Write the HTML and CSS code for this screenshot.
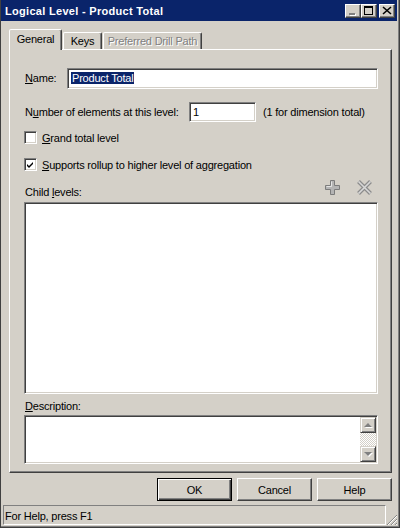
FILE: index.html
```html
<!DOCTYPE html>
<html lang="en">
<head>
    <meta charset="UTF-8">
    <title>Logical Level - Product Total</title>
    <link rel="stylesheet" href="styles.css">
</head>
<body>
    <div class="window">
        <div class="titlebar">
            <span class="title">Logical Level - Product Total</span>
            <div class="caption-buttons">
                <span class="cap-btn">
                    <svg width="14" height="12" viewBox="0 0 14 12">
                        <rect x="4" y="9" width="6" height="2" fill="#fff"/>
                        <rect x="3" y="8" width="6" height="2" fill="#808080"/>
                    </svg>
                </span>
                <span class="cap-btn">
                    <svg width="14" height="12" viewBox="0 0 14 12">
                        <path d="M2 1h9v9h-9z M3 3v6h7v-6z" fill="#000" fill-rule="evenodd"/>
                    </svg>
                </span>
                <span class="cap-btn close">
                    <svg width="14" height="12" viewBox="0 0 14 12">
                        <path d="M3 2l8 7M11 2l-8 7" stroke="#000" stroke-width="1.6"/>
                    </svg>
                </span>
            </div>
        </div>

        <div class="content">
            <div class="tabs">
                <div class="tab active">General</div>
                <div class="tab keys">Keys</div>
                <div class="tab disabled">Preferred Drill Path</div>
            </div>

            <div class="panel">
                <div class="row name-row">
                    <label class="lbl name-lbl"><u>N</u>ame:</label>
                    <div class="field name-field"><span class="selected">Product Total</span></div>
                </div>

                <div class="row number-row">
                    <label class="lbl">N<u>u</u>mber of elements at this level:</label>
                    <div class="field number-field">1</div>
                    <span class="hint">(1 for dimension total)</span>
                </div>

                <div class="check-row first">
                    <span class="checkbox"></span>
                    <span><u>G</u>rand total level</span>
                </div>

                <div class="check-row second">
                    <span class="checkbox">
                        <svg width="9" height="9" viewBox="0 0 9 9">
                            <path d="M1 3l2 2 4-4v2l-4 4-2-2z" fill="#000"/>
                        </svg>
                    </span>
                    <span><u>S</u>upports rollup to higher level of aggregation</span>
                </div>

                <div class="list-head">
                    <label class="lbl">Child <u>l</u>evels:</label>
                    <div class="tools">
                        <svg class="tool" width="17" height="17" viewBox="0 0 17 17">
                            <path d="M6.5 1.5h4v5h5v4h-5v5h-4v-5h-5v-4h5z" fill="#b4b4b4" stroke="#7c7c7c"/>
                            <path d="M7.5 2.5v5h-5" fill="none" stroke="#e4e4e4"/>
                        </svg>
                        <svg class="tool" width="17" height="17" viewBox="0 0 17 17">
                            <path d="M2.5 2.5l12 12M14.5 2.5l-12 12" stroke="#8c8c8c" stroke-width="4"/>
                            <path d="M2.5 2.5l12 12M14.5 2.5l-12 12" stroke="#d8d8d8" stroke-width="1.6"/>
                        </svg>
                    </div>
                </div>
                <div class="listbox"></div>

                <label class="lbl desc-lbl"><u>D</u>escription:</label>
                <div class="memo">
                    <div class="memo-text"></div>
                    <div class="scrollbar">
                        <span class="scroll-btn">
                            <svg width="9" height="5" viewBox="0 0 9 5">
                                <path d="M5 1l4 4h-8z" fill="#fff"/>
                                <path d="M4 0l4 4h-8z" fill="#808080"/>
                            </svg>
                        </span>
                        <span class="track"></span>
                        <span class="scroll-btn">
                            <svg width="9" height="5" viewBox="0 0 9 5">
                                <path d="M1 1h8l-4 4z" fill="#fff"/>
                                <path d="M0 0h8l-4 4z" fill="#808080"/>
                            </svg>
                        </span>
                    </div>
                </div>
            </div>

            <div class="buttons">
                <button class="btn default">OK</button>
                <button class="btn">Cancel</button>
                <button class="btn">Help</button>
            </div>
        </div>

        <div class="statusbar">
            <div class="status-text">For Help, press F1</div>
            <svg class="grip" width="12" height="12" viewBox="0 0 12 12">
                <path d="M11 1L1 11M11 5L5 11M11 9L9 11" stroke="#808080" stroke-width="1"/>
                <path d="M11 2L2 11M11 6L6 11M11 10L10 11" stroke="#fff" stroke-width="1"/>
            </svg>
        </div>
    </div>
</body>
</html>
```

FILE: styles.css
```css
* {
    box-sizing: border-box;
}
body {
    margin: 0;
    background-color: #d4d0c8;
    font-family: "Liberation Sans", Arial, sans-serif;
    font-size: 11px;
    letter-spacing: -.2px;
    color: #000;
}
u {
    text-decoration: underline;
    text-underline-offset: 1px;
}
.window {
    width: 400px;
    height: 528px;
    display: flex;
    flex-direction: column;
    border-left: 1px solid #404040;
    border-right: 1px solid #404040;
    border-bottom: 1px solid #404040;
    box-shadow: inset -1px -1px #808080;
}
.titlebar {
    height: 21px;
    margin-right: 2px;
    background-color: #0a246a;
    display: flex;
    align-items: center;
    justify-content: space-between;
    padding: 0 2px 0 4px;
}
.title {
    color: #fff;
    font-weight: bold;
    letter-spacing: .3px;
    padding-top: 1px;
}
.caption-buttons {
    display: flex;
}
.cap-btn {
    width: 16px;
    height: 14px;
    display: flex;
    align-items: center;
    justify-content: center;
    background-color: #d4d0c8;
    border: 1px solid;
    border-color: #fff #404040 #404040 #fff;
    box-shadow: inset -1px -1px #808080;
}
.cap-btn.close {
    margin-left: 2px;
}
.content {
    flex: 1;
    display: flex;
    flex-direction: column;
    padding: 8px 7px 0 8px;
}
.tabs {
    height: 20px;
    display: flex;
    align-items: flex-end;
}
.tab {
    height: 17px;
    padding-top: 2px;
    text-align: center;
    border: 1px solid;
    border-bottom: none;
    border-color: #fff #404040 transparent #fff;
    border-radius: 2px 2px 0 0;
    box-shadow: inset -1px 0 #808080;
    white-space: nowrap;
}
.tab.active {
    width: 53px;
    height: 21px;
    margin-bottom: -1px;
    padding-top: 3px;
    position: relative;
    z-index: 1;
    background-color: #d4d0c8;
}
.tab.keys {
    width: 39px;
    margin-left: 1px;
}
.tab.disabled {
    width: 99px;
    margin-left: 1px;
    color: #808080;
    text-shadow: 1px 1px #fff;
}
.panel {
    height: 424px;
    border: 1px solid;
    border-color: #fff #404040 #404040 #fff;
    box-shadow: inset -1px -1px #808080;
    padding: 18px 13px 0 15px;
    display: flex;
    flex-direction: column;
}
.row {
    display: flex;
    align-items: center;
}
.lbl {
    line-height: 13px;
}
.name-lbl {
    width: 42px;
}
.field {
    height: 20px;
    background-color: #fff;
    border: 1px solid;
    border-color: #808080 #fff #fff #808080;
    box-shadow: inset 1px 1px #404040, inset -1px -1px #d4d0c8;
    padding: 3px 0 0 3px;
    line-height: 13px;
}
.name-field {
    flex: 1;
    height: 21px;
}
.selected {
    background-color: #0a246a;
    color: #fff;
    padding: 0 1px;
}
.number-row {
    margin-top: 13px;
}
.number-row .lbl {
    width: 164px;
}
.number-field {
    width: 67px;
}
.hint {
    margin-left: 7px;
}
.check-row {
    display: flex;
    align-items: center;
    gap: 5px;
    height: 13px;
    margin-left: -1px;
}
.check-row.first {
    margin-top: 9px;
}
.check-row.second {
    margin-top: 14px;
}
.checkbox {
    width: 13px;
    height: 13px;
    background-color: #fff;
    border: 1px solid;
    border-color: #808080 #fff #fff #808080;
    box-shadow: inset 1px 1px #404040, inset -1px -1px #d4d0c8;
    display: flex;
    align-items: center;
    justify-content: center;
}
.checkbox svg {
    margin: 1px 0 0 0;
}
.list-head {
    height: 31px;
    display: flex;
    justify-content: space-between;
    align-items: flex-end;
    padding-bottom: 3px;
}
.tools {
    align-self: flex-start;
    display: flex;
    gap: 15px;
    margin-top: 8px;
    margin-right: 5px;
}
.listbox {
    height: 192px;
    margin-left: -1px;
    background-color: #fff;
    border: 1px solid;
    border-color: #808080 #fff #fff #808080;
    box-shadow: inset 1px 1px #404040, inset -1px -1px #d4d0c8;
}
.desc-lbl {
    margin-top: 6px;
}
.memo {
    height: 49px;
    margin-top: 2px;
    margin-left: -1px;
    display: flex;
    background-color: #fff;
    border: 1px solid;
    border-color: #808080 #fff #fff #808080;
    box-shadow: inset 1px 1px #404040, inset -1px -1px #d4d0c8;
    padding: 1px;
}
.memo-text {
    flex: 1;
}
.scrollbar {
    width: 16px;
    display: flex;
    flex-direction: column;
}
.scroll-btn {
    height: 16px;
    display: flex;
    align-items: center;
    justify-content: center;
    background-color: #d4d0c8;
    border: 1px solid;
    border-color: #d4d0c8 #404040 #404040 #d4d0c8;
    box-shadow: inset 1px 1px #fff, inset -1px -1px #808080;
}
.track {
    flex: 1;
    background: repeating-conic-gradient(#d4d0c8 0 25%, #fff 0 50%) 0 0 / 2px 2px;
}
.buttons {
    display: flex;
    justify-content: flex-end;
    gap: 5px;
    margin-top: 5px;
}
.btn {
    width: 75px;
    height: 23px;
    font-family: "Liberation Sans", Arial, sans-serif;
    font-size: 11px;
    letter-spacing: -.2px;
    color: #000;
    background-color: #d4d0c8;
    border: 1px solid;
    border-color: #fff #404040 #404040 #fff;
    box-shadow: inset -1px -1px #808080;
    padding: 0;
}
.btn.default {
    border: 1px solid #000;
    box-shadow: inset 1px 1px #fff, inset -1px -1px #404040, inset -2px -2px #808080;
}
.statusbar {
    height: 22px;
    display: flex;
    align-items: flex-end;
    padding: 0 1px 2px 2px;
}
.status-text {
    width: 385px;
    height: 20px;
    border: 1px solid;
    border-color: #808080 #fff #fff #808080;
    padding: 4px 0 0 1px;
    line-height: 13px;
}
.grip {
    margin-bottom: -1px;
}
```
